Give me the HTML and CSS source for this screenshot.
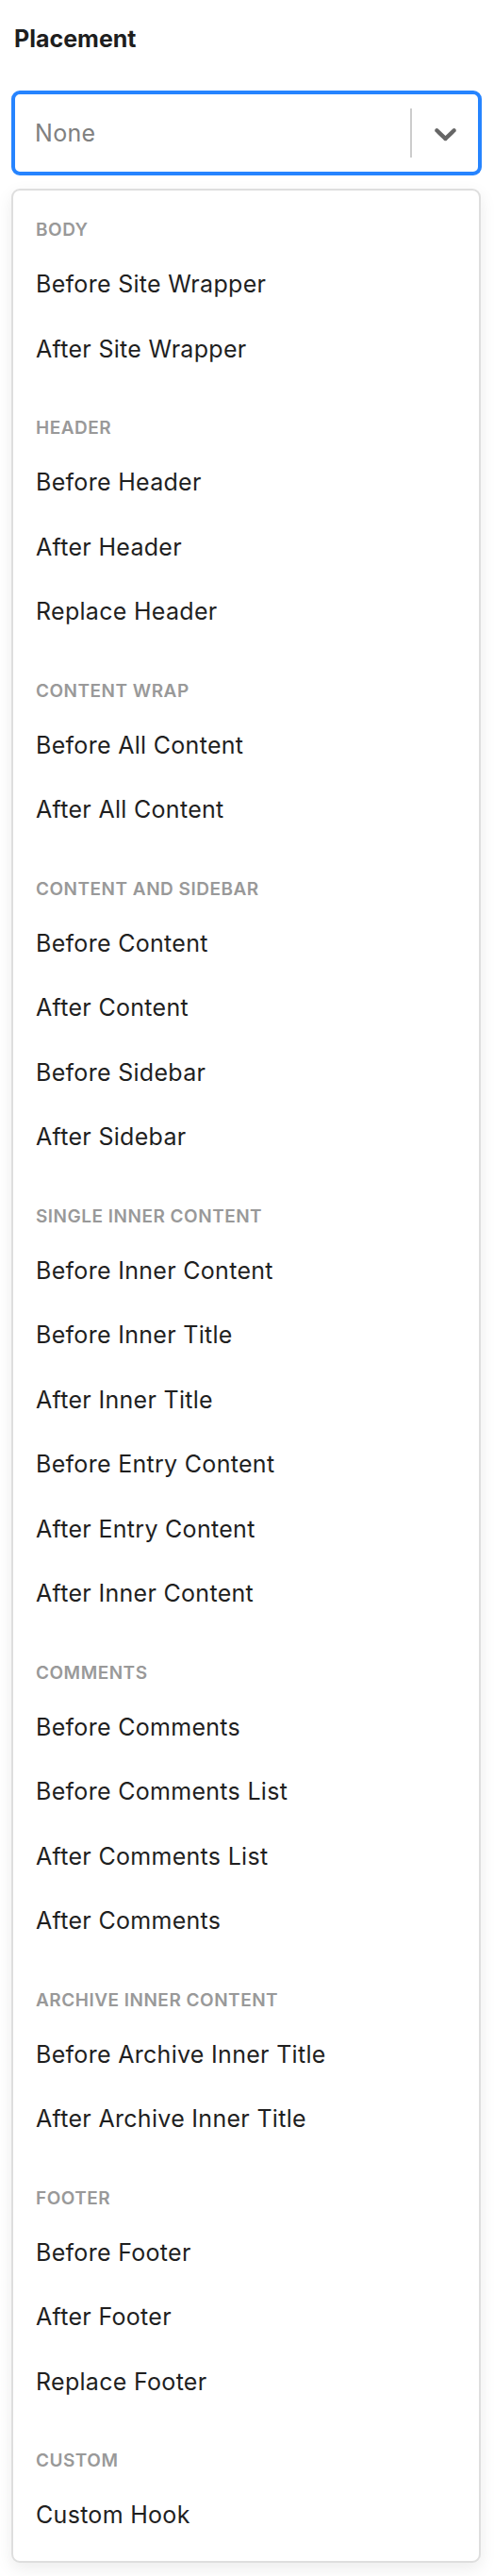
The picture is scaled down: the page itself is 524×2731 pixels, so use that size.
FILE: index.html
```html
<!DOCTYPE html>
<html lang="en">
<head>
    <meta charset="UTF-8">
    <meta name="viewport" content="width=device-width, initial-scale=1.0">
    <title>Placement</title>
    <link rel="stylesheet" href="styles.css">
</head>
<body>
    <div class="field">
        <label class="field-label">Placement</label>
        <div class="select">
            <div class="select-value">None</div>
            <div class="select-indicators">
                <span class="select-separator"></span>
                <div class="select-arrow">
                    <svg viewBox="0 0 20 20" width="39" height="39" aria-hidden="true">
                        <path d="M4.516 7.548c0.436-0.446 1.043-0.481 1.576 0l3.908 3.747 3.908-3.747c0.533-0.481 1.141-0.446 1.574 0 0.436 0.445 0.408 1.197 0 1.615-0.406 0.418-4.695 4.502-4.695 4.502-0.217 0.223-0.502 0.335-0.787 0.335s-0.57-0.112-0.789-0.335c0 0-4.287-4.084-4.695-4.502s-0.436-1.17 0-1.615z"></path>
                    </svg>
                </div>
            </div>
        </div>
        <div class="menu">
            <div class="menu-list">
                <div class="group">
                    <div class="group-heading">Body</div>
                    <div class="option">Before Site Wrapper</div>
                    <div class="option">After Site Wrapper</div>
                </div>
                <div class="group">
                    <div class="group-heading">Header</div>
                    <div class="option">Before Header</div>
                    <div class="option">After Header</div>
                    <div class="option">Replace Header</div>
                </div>
                <div class="group">
                    <div class="group-heading">Content Wrap</div>
                    <div class="option">Before All Content</div>
                    <div class="option">After All Content</div>
                </div>
                <div class="group">
                    <div class="group-heading">Content and Sidebar</div>
                    <div class="option">Before Content</div>
                    <div class="option">After Content</div>
                    <div class="option">Before Sidebar</div>
                    <div class="option">After Sidebar</div>
                </div>
                <div class="group">
                    <div class="group-heading">Single Inner Content</div>
                    <div class="option">Before Inner Content</div>
                    <div class="option">Before Inner Title</div>
                    <div class="option">After Inner Title</div>
                    <div class="option">Before Entry Content</div>
                    <div class="option">After Entry Content</div>
                    <div class="option">After Inner Content</div>
                </div>
                <div class="group">
                    <div class="group-heading">Comments</div>
                    <div class="option">Before Comments</div>
                    <div class="option">Before Comments List</div>
                    <div class="option">After Comments List</div>
                    <div class="option">After Comments</div>
                </div>
                <div class="group">
                    <div class="group-heading">Archive Inner Content</div>
                    <div class="option">Before Archive Inner Title</div>
                    <div class="option">After Archive Inner Title</div>
                </div>
                <div class="group">
                    <div class="group-heading">Footer</div>
                    <div class="option">Before Footer</div>
                    <div class="option">After Footer</div>
                    <div class="option">Replace Footer</div>
                </div>
                <div class="group">
                    <div class="group-heading">Custom</div>
                    <div class="option">Custom Hook</div>
                </div>
            </div>
        </div>
    </div>
</body>
</html>
```

FILE: styles.css
```css
/* Base */
body {
    font-family: Inter, "Noto Sans", sans-serif;
    margin: 0;
    background: #fff;
    color: #1f1f1f;
}
.field {
    padding: 26px 13px 14px 12px;
}
.field-label {
    display: block;
    font-size: 25px;
    font-weight: 700;
    line-height: 30px;
    padding-left: 3px;
    margin-bottom: 40px;
    color: #1e1e1e;
}

/* Select control */
.select {
    display: flex;
    align-items: center;
    height: 90px;
    box-sizing: border-box;
    border: 4px solid #2684ff;
    border-radius: 9px;
    background: #fff;
}
.select-value {
    flex: 1;
    padding-left: 21px;
    font-size: 25px;
    line-height: 30px;
    letter-spacing: 0.3px;
    color: #808080;
}
.select-indicators {
    display: flex;
    align-items: stretch;
    align-self: stretch;
}
.select-separator {
    width: 2px;
    margin: 15px 0;
    background: #cccccc;
}
.select-arrow {
    display: flex;
    align-items: center;
    justify-content: center;
    width: 70px;
}
.select-arrow svg {
    fill: #666666;
}

/* Menu */
.menu {
    margin-top: 14px;
    margin-right: 1px;
    border: 2px solid #dedede;
    border-radius: 9px;
    background: #fff;
    box-shadow: 0 6px 18px rgba(0, 0, 0, 0.08);
}
.menu-list {
    padding: 3px 0;
}
.group {
    padding: 28px 0 11px;
}
.group-heading {
    padding-left: 24px;
    margin-bottom: 12px;
    font-size: 19px;
    font-weight: 600;
    line-height: 22px;
    letter-spacing: 0.5px;
    text-transform: uppercase;
    color: #999999;
}
.option {
    padding-left: 24px;
    height: 68.5px;
    line-height: 68.5px;
    font-size: 25px;
    letter-spacing: 0.3px;
    color: #1f1f1f;
}
```
